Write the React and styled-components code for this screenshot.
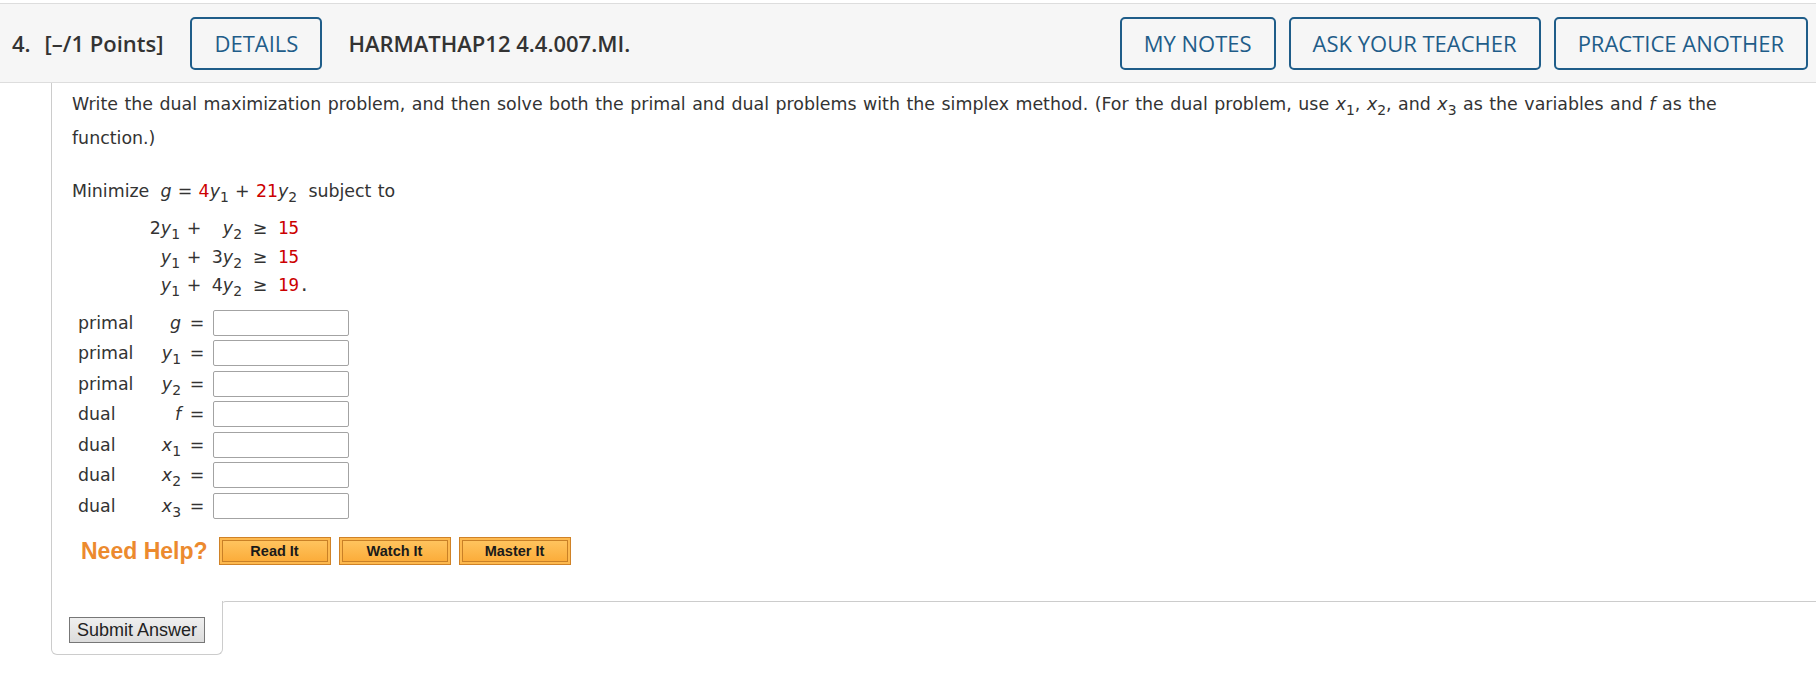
import React from 'react';
import styled, { createGlobalStyle } from 'styled-components';

const GlobalStyle = createGlobalStyle`
  html, body {
    margin: 0;
    padding: 0;
    background: #fff;
  }
  body {
    font-family: 'DejaVu Sans', Verdana, sans-serif;
    color: #333;
  }
`;

const Page = styled.div`
  padding-top: 3px;
  width: 1816px;
`;

const Header = styled.div`
  display: flex;
  align-items: center;
  height: 78px;
  padding: 0 8px 0 12px;
  background: #f6f6f6;
  border-top: 1px solid #ddd;
  border-bottom: 1px solid #ddd;
  font-family: 'Open Sans', 'Noto Sans', sans-serif;
`;

const Title = styled.div`
  font-size: 22px;
  font-weight: 600;
  color: #333;
  margin-right: 27px;
  span + span {
    margin-left: 14px;
  }
`;

const OutlineButton = styled.button`
  height: 53px;
  padding: 0 22px;
  border: 2px solid #1f5d89;
  border-radius: 5px;
  background: transparent;
  color: #1f5d89;
  font-family: 'Open Sans', 'Noto Sans', sans-serif;
  font-size: 22px;
  cursor: pointer;
`;

const Code = styled.div`
  font-size: 22px;
  font-weight: 600;
  color: #333;
  margin-left: 26px;
`;

const Actions = styled.div`
  display: flex;
  gap: 13px;
  margin-left: auto;
`;

const Body = styled.div`
  margin-left: 51px;
  border-left: 1px solid #ccc;
  padding: 4px 40px 36px 20px;
  font-size: 17.4px;
  word-spacing: 1px;
`;

const Para = styled.p`
  margin: 0;
  line-height: 34px;
`;

const Var = styled.i`
  font-style: italic;
`;

const Sub = styled.sub`
  font-size: 0.8em;
  font-style: normal;
  vertical-align: -0.35em;
  line-height: 0;
`;

const Red = styled.span`
  color: #c00;
`;

const Objective = styled.div`
  margin-top: 19px;
  line-height: 34px;
  word-spacing: 0.7px;
  span.sp {
    margin-left: 5px;
  }
`;

const Constraints = styled.div`
  display: grid;
  grid-template-columns: 38px 28px 34px 36px auto;
  grid-auto-rows: 28.5px;
  align-items: center;
  margin: 6px 0 0 70px;
  word-spacing: 0;
`;

const Cell = styled.div`
  text-align: ${(p) => p.align || 'left'};
  white-space: nowrap;
`;

const Num = styled.span`
  color: ${(p) => (p.plain ? '#333' : '#c00')};
  font-family: 'DejaVu Sans Mono', 'Liberation Mono', monospace;
  font-size: 17.5px;
`;

const Answers = styled.div`
  display: grid;
  grid-template-columns: 72px 31px 32px 136px;
  grid-auto-rows: 30.5px;
  align-items: center;
  margin: 8px 0 0 6px;
`;

const Label = styled.div`
  color: #333;
`;

const VarCell = styled.div`
  text-align: right;
`;

const Eq = styled.div`
  text-align: center;
`;

const AnswerInput = styled.input`
  box-sizing: border-box;
  width: 136px;
  height: 26px;
  border: 1px solid #a3a3a3;
  border-radius: 2px;
  background: #fff;
`;

const Help = styled.div`
  display: flex;
  align-items: center;
  gap: 8px;
  margin: 16px 0 0 9px;
  height: 28px;
  word-spacing: 0;
`;

const HelpLabel = styled.span`
  font-family: 'Liberation Sans', Arial, sans-serif;
  font-weight: 700;
  font-size: 23px;
  color: #ec8a2e;
  margin-right: 3px;
`;

const HelpButton = styled.button`
  box-sizing: border-box;
  width: 112px;
  height: 28px;
  padding: 0;
  border: 1px solid #d08227;
  background: linear-gradient(#ffc763, #fba935);
  box-shadow: inset 0 0 0 2px #fdb94f, inset 0 0 0 3px #c98026;
  font-family: 'Liberation Sans', Arial, sans-serif;
  font-weight: 700;
  font-size: 14.5px;
  color: #1a1a1a;
`;

const Footer = styled.div`
  display: flex;
  margin-left: 51px;
`;

const SubmitTab = styled.div`
  width: 153px;
  padding: 16px 0 11px 17px;
  border: 1px solid #ccc;
  border-top: none;
  border-radius: 0 0 6px 6px;
`;

const Filler = styled.div`
  flex: 1;
  margin-left: -1px;
  border-top: 1px solid #ccc;
  border-top-left-radius: 4px;
`;

const SubmitButton = styled.button`
  box-sizing: border-box;
  height: 26px;
  width: 136px;
  padding: 0;
  border: 1px solid #777;
  background: linear-gradient(#efefef, #dcdcdc);
  font-family: 'Liberation Sans', Arial, sans-serif;
  font-size: 18px;
  color: #222;
`;

const answers = [
  ['primal', <Var>g</Var>],
  ['primal', <><Var>y</Var><Sub>1</Sub></>],
  ['primal', <><Var>y</Var><Sub>2</Sub></>],
  ['dual', <Var>f</Var>],
  ['dual', <><Var>x</Var><Sub>1</Sub></>],
  ['dual', <><Var>x</Var><Sub>2</Sub></>],
  ['dual', <><Var>x</Var><Sub>3</Sub></>],
];

const constraints = [
  [<>2<Var>y</Var><Sub>1</Sub></>, <><Var>y</Var><Sub>2</Sub></>, '15', ''],
  [<><Var>y</Var><Sub>1</Sub></>, <>3<Var>y</Var><Sub>2</Sub></>, '15', ''],
  [<><Var>y</Var><Sub>1</Sub></>, <>4<Var>y</Var><Sub>2</Sub></>, '19', '.'],
];

const App = () => (
  <Page>
    <GlobalStyle />
    <Header>
      <Title>
        <span>4.</span>
        <span>[–/1 Points]</span>
      </Title>
      <OutlineButton>DETAILS</OutlineButton>
      <Code>HARMATHAP12 4.4.007.MI.</Code>
      <Actions>
        <OutlineButton>MY NOTES</OutlineButton>
        <OutlineButton>ASK YOUR TEACHER</OutlineButton>
        <OutlineButton>PRACTICE ANOTHER</OutlineButton>
      </Actions>
    </Header>
    <Body>
      <Para>
        Write the dual maximization problem, and then solve both the primal and dual problems
        with the simplex method. (For the dual problem, use <Var>x</Var><Sub>1</Sub>,{' '}
        <Var>x</Var><Sub>2</Sub>, and <Var>x</Var><Sub>3</Sub> as the variables and{' '}
        <Var>f</Var> as the function.)
      </Para>
      <Objective>
        Minimize <span className="sp" />
        <Var>g</Var> = <Red>4</Red><Var>y</Var><Sub>1</Sub> + <Red>21</Red><Var>y</Var>
        <Sub>2</Sub> <span className="sp" />subject to
      </Objective>
      <Constraints>
        {constraints.map(([a, b, n, dot], i) => (
          <React.Fragment key={i}>
            <Cell align="right">{a}</Cell>
            <Cell align="center">+</Cell>
            <Cell align="right">{b}</Cell>
            <Cell align="center">≥</Cell>
            <Cell>
              <Num>{n}</Num>
              {dot && <Num plain>{dot}</Num>}
            </Cell>
          </React.Fragment>
        ))}
      </Constraints>
      <Answers>
        {answers.map(([label, v], i) => (
          <React.Fragment key={i}>
            <Label>{label}</Label>
            <VarCell>{v}</VarCell>
            <Eq>=</Eq>
            <AnswerInput type="text" />
          </React.Fragment>
        ))}
      </Answers>
      <Help>
        <HelpLabel>Need Help?</HelpLabel>
        <HelpButton>Read It</HelpButton>
        <HelpButton>Watch It</HelpButton>
        <HelpButton>Master It</HelpButton>
      </Help>
    </Body>
    <Footer>
      <SubmitTab>
        <SubmitButton>Submit Answer</SubmitButton>
      </SubmitTab>
      <Filler />
    </Footer>
  </Page>
);

export default App;
